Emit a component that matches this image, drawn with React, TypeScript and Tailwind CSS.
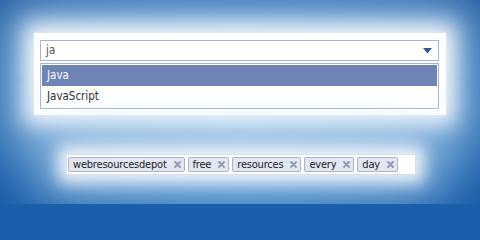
import React from "react";

const font = { fontFamily: '"DejaVu Sans Condensed", "DejaVu Sans", sans-serif' };

function X() {
  return (
    <svg width="7" height="7" viewBox="0 0 7 7" className="shrink-0">
      <path d="M1 1 L6 6 M6 1 L1 6" stroke="#8e99ae" strokeWidth="1.8" strokeLinecap="round" />
    </svg>
  );
}

function Tag({ label }: { label: string }) {
  return (
    <div className="flex h-[15px] items-center gap-[7px] rounded-[2px] border border-[#a9b4cf] bg-[#e3e7f1] pl-[4px] pr-[3px] text-[11px] leading-none tracking-[-0.2px] text-[#1c1c28]">
      <span>{label}</span>
      <X />
    </div>
  );
}

export default function App() {
  return (
    <div className="min-h-screen bg-[#1a5fa9]" style={font}>
      <div className="relative h-[204px] w-[480px] overflow-hidden bg-[radial-gradient(ellipse_at_50%_60%,#4a8ecd_0%,#2c76be_45%,#1b60aa_80%,#15539a_100%)]">
        <div className="flex flex-col items-start pt-[33px]">
          <div className="ml-[34px] w-[412px] bg-white p-[6px] pb-[6px] pt-[7px] shadow-[0_0_20px_10px_rgba(255,255,255,0.9),0_0_60px_34px_rgba(205,228,246,0.6)]">
            <div className="flex h-[21px] w-[399px] items-center justify-between border border-[#a7b4d8] bg-white pl-[5px] pr-[6px] text-[11.5px] text-[#555]">
              <span>ja</span>
              <svg width="9" height="6" viewBox="0 0 9 6">
                <path d="M0 0 H9 L4.5 5.5 Z" fill="#2f5b96" />
              </svg>
            </div>
            <div className="mt-[2px] w-[399px] border border-[#a7b4d8] bg-white p-[1px] text-[11.5px]">
              <div className="flex h-[21px] items-center bg-[#6f84b6] pl-[5px] text-white">Java</div>
              <div className="flex h-[21px] items-center pl-[5px] text-[#2a2a2a]">JavaScript</div>
            </div>
          </div>
          <div className="ml-[66px] mt-[39px] flex h-[21px] w-[350px] items-center gap-[3px] border border-[#d8dfea] bg-white pl-[1px] shadow-[0_0_16px_8px_rgba(255,255,255,0.85),0_0_50px_26px_rgba(205,228,246,0.55)]">
            <Tag label="webresourcesdepot" />
            <Tag label="free" />
            <Tag label="resources" />
            <Tag label="every" />
            <Tag label="day" />
          </div>
        </div>
      </div>
    </div>
  );
}
